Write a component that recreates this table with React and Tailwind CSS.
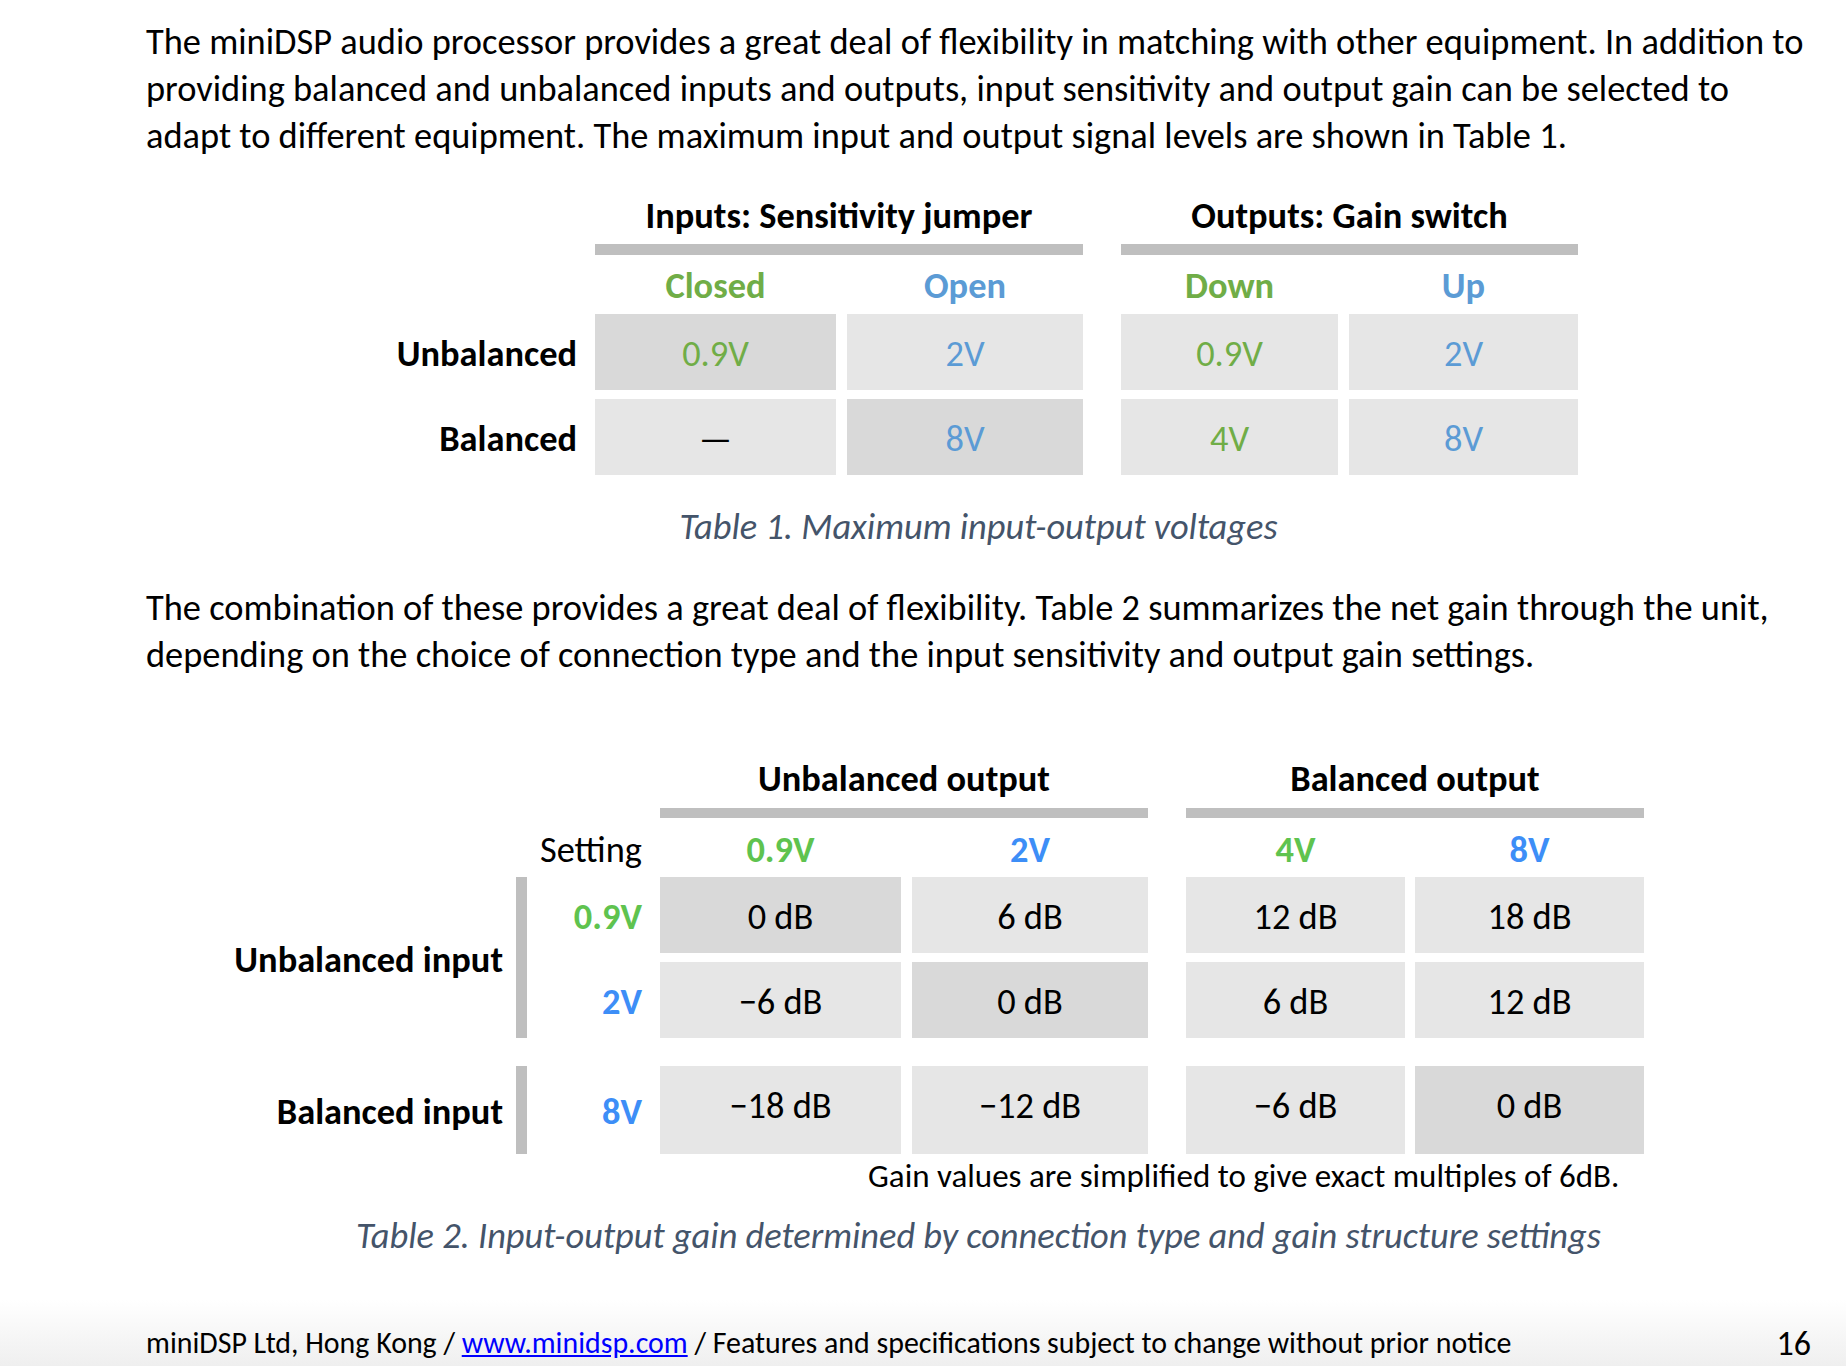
import React from 'react';

// colours picked from the document
const GREEN1 = 'text-[#70ad47]';
const BLUE1 = 'text-[#5b9bd5]';
const GREEN2 = 'text-[#5fc34f]';
const BLUE2 = 'text-[#3d8ef7]';

const Cell = ({ children, width, dark, color = 'text-black', pad = 'pt-[5px]' }) => (
  <div className={`${width} ${dark ? 'bg-[#d9d9d9]' : 'bg-[#e6e6e6]'} ${color} ${pad} flex items-center justify-center`}>
    {children}
  </div>
);

const t1Widths = ['w-[241px]', 'w-[236px]', 'w-[217px]', 'w-[229px]'];
const t2Widths = ['w-[241px]', 'w-[236px]', 'w-[219px]', 'w-[229px]'];

const table1 = [
  {
    label: 'Unbalanced',
    cells: [
      { v: '0.9V', c: GREEN1, dark: true },
      { v: '2V', c: BLUE1 },
      { v: '0.9V', c: GREEN1 },
      { v: '2V', c: BLUE1 },
    ],
  },
  {
    label: 'Balanced',
    cells: [
      { v: '—', c: 'text-black' },
      { v: '8V', c: BLUE1, dark: true },
      { v: '4V', c: GREEN1 },
      { v: '8V', c: BLUE1 },
    ],
  },
];

const Table1 = () => (
  <div className="mt-[32px]">
    {/* group headers */}
    <div className="flex font-bold">
      <div className="w-[449px]" />
      <div className="w-[488px]">
        <div className="h-[47px] pt-[1px] leading-[47px] text-center">Inputs: Sensitivity jumper</div>
        <div className="mt-[6px] h-[11px] bg-[#bfbfbf]" />
      </div>
      <div className="ml-[38px] w-[457px]">
        <div className="h-[47px] pt-[1px] leading-[47px] text-center">Outputs: Gain switch</div>
        <div className="mt-[6px] h-[11px] bg-[#bfbfbf]" />
      </div>
    </div>

    {/* setting names */}
    <div className="flex h-[59px] items-center pt-[3px] font-bold">
      <div className="w-[449px]" />
      <div className="flex gap-[11px]">
        <div className={`w-[241px] text-center ${GREEN1}`}>Closed</div>
        <div className={`w-[236px] text-center ${BLUE1}`}>Open</div>
      </div>
      <div className="ml-[38px] flex gap-[11px]">
        <div className={`w-[217px] text-center ${GREEN1}`}>Down</div>
        <div className={`w-[229px] text-center ${BLUE1}`}>Up</div>
      </div>
    </div>

    <div className="flex flex-col gap-[9px]">
      {table1.map(row => (
        <div key={row.label} className="flex h-[76px]">
          <div className="mr-[18px] flex w-[431px] items-center justify-end pt-[5px] font-bold">{row.label}</div>
          <div className="flex gap-[11px]">
            {row.cells.slice(0, 2).map((c, i) => (
              <Cell key={i} width={t1Widths[i]} dark={c.dark} color={c.c}>{c.v}</Cell>
            ))}
          </div>
          <div className="ml-[38px] flex gap-[11px]">
            {row.cells.slice(2).map((c, i) => (
              <Cell key={i} width={t1Widths[i + 2]} dark={c.dark} color={c.c}>{c.v}</Cell>
            ))}
          </div>
        </div>
      ))}
    </div>

    <p className="mt-[28px] text-center italic leading-[47px] text-[#44546a]">Table 1. Maximum input-output voltages</p>
  </div>
);

const GainRow = ({ label, color, cells, height, pad }) => (
  <div className={`flex ${height}`}>
    <div className={`mr-[18px] flex w-[115px] items-center justify-end pt-[5px] font-bold ${color}`}>{label}</div>
    <div className="flex gap-[11px]">
      {cells.slice(0, 2).map((c, i) => (
        <Cell key={i} width={t2Widths[i]} dark={c.dark} pad={pad}>{c.v}</Cell>
      ))}
    </div>
    <div className="ml-[38px] flex gap-[10px]">
      {cells.slice(2).map((c, i) => (
        <Cell key={i} width={t2Widths[i + 2]} dark={c.dark} pad={pad}>{c.v}</Cell>
      ))}
    </div>
  </div>
);

const Table2 = () => (
  <div className="mt-[76px]">
    <div className="flex font-bold">
      <div className="w-[514px]" />
      <div className="w-[488px]">
        <div className="h-[47px] pt-[1px] leading-[47px] text-center">Unbalanced output</div>
        <div className="mt-[7px] h-[10px] bg-[#bfbfbf]" />
      </div>
      <div className="ml-[38px] w-[458px]">
        <div className="h-[47px] pt-[1px] leading-[47px] text-center">Balanced output</div>
        <div className="mt-[7px] h-[10px] bg-[#bfbfbf]" />
      </div>
    </div>

    <div className="flex h-[59px] items-center pt-[5px]">
      <div className="w-[381px]" />
      <div className="mr-[18px] w-[115px] text-right">Setting</div>
      <div className="flex gap-[11px] font-bold">
        <div className={`w-[241px] text-center ${GREEN2}`}>0.9V</div>
        <div className={`w-[236px] text-center ${BLUE2}`}>2V</div>
      </div>
      <div className="ml-[38px] flex gap-[10px] font-bold">
        <div className={`w-[219px] text-center ${GREEN2}`}>4V</div>
        <div className={`w-[229px] text-center ${BLUE2}`}>8V</div>
      </div>
    </div>

    {/* unbalanced input group */}
    <div className="flex">
      <div className="flex w-[357px] items-center justify-end pt-[6px] font-bold">Unbalanced input</div>
      <div className="ml-[13px] w-[11px] bg-[#bfbfbf]" />
      <div className="flex flex-col gap-[9px]">
        <GainRow
          label="0.9V"
          color={GREEN2}
          height="h-[76px]"
          cells={[{ v: '0 dB', dark: true }, { v: '6 dB' }, { v: '12 dB' }, { v: '18 dB' }]}
        />
        <GainRow
          label="2V"
          color={BLUE2}
          height="h-[76px]"
          cells={[{ v: '−6 dB' }, { v: '0 dB', dark: true }, { v: '6 dB' }, { v: '12 dB' }]}
        />
      </div>
    </div>

    {/* balanced input group */}
    <div className="mt-[28px] flex">
      <div className="flex w-[357px] items-center justify-end pt-[5px] font-bold">Balanced input</div>
      <div className="ml-[13px] w-[11px] bg-[#bfbfbf]" />
      <GainRow
        label="8V"
        color={BLUE2}
        height="h-[88px]"
        pad="pb-[7px]"
        cells={[{ v: '−18 dB' }, { v: '−12 dB' }, { v: '−6 dB' }, { v: '0 dB', dark: true }]}
      />
    </div>

    <p className="ml-[722px] mt-[2px] text-[33px] leading-[40px]">Gain values are simplified to give exact multiples of 6dB.</p>

    <p className="mt-[16px] text-center italic leading-[47px] text-[#44546a]">
      Table 2. Input-output gain determined by connection type and gain structure settings
    </p>
  </div>
);

export default function App() {
  return (
    <div className="flex h-[1366px] flex-col overflow-hidden bg-white font-[Carlito,Liberation_Sans,sans-serif] text-[36.4px] text-black">
      <div className="w-[1811px] pl-[146px]">
        <p className="whitespace-nowrap pt-[18px] leading-[47px]">
          The miniDSP audio processor provides a great deal of flexibility in matching with other equipment. In addition to
          <br />
          providing balanced and unbalanced inputs and outputs, input sensitivity and output gain can be selected to
          <br />
          adapt to different equipment. The maximum input and output signal levels are shown in Table 1.
        </p>

        <Table1 />

        <p className="mt-[34px] whitespace-nowrap leading-[47px]">
          The combination of these provides a great deal of flexibility. Table 2 summarizes the net gain through the unit,
          <br />
          depending on the choice of connection type and the input sensitivity and output gain settings.
        </p>

        <Table2 />
      </div>

      {/* page footer */}
      <div className="mt-auto flex h-[66px] items-center justify-between bg-gradient-to-b from-white to-[#efefef] pl-[146px] pr-[35px] pt-[20px]">
        <div className="text-[29.9px]">
          miniDSP Ltd, Hong Kong / <a href="#" className="text-[#0000ff] underline">www.minidsp.com</a> / Features and
          specifications subject to change without prior notice
        </div>
        <div className="text-[34px]">16</div>
      </div>
    </div>
  );
}
